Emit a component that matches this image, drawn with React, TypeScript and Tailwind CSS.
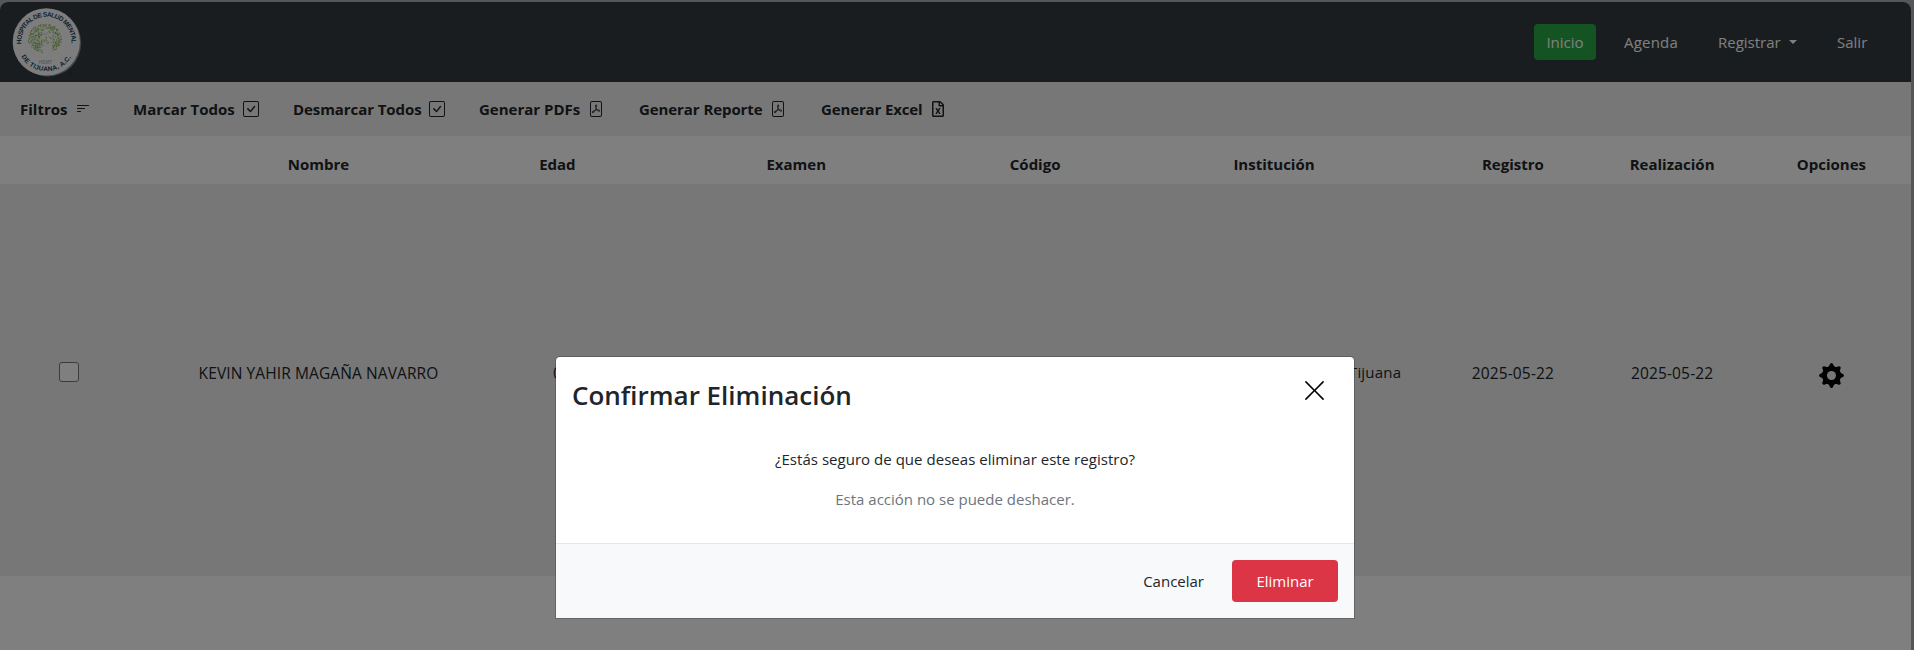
import { BsFilterLeft, BsCheckSquare, BsFilePdf, BsXLg } from "react-icons/bs";
import { FaRegFileExcel } from "react-icons/fa";

function brainDots() {
  const dots: { x: number; y: number; r: number; o: number }[] = [];
  let seed = 7;
  const rnd = () => {
    seed = (seed * 16807) % 2147483647;
    return seed / 2147483647;
  };
  while (dots.length < 520) {
    const x = 28 + rnd() * 36;
    const y = 23 + rnd() * 32;
    const dist = ((x - 45) / 17) ** 2 + ((y - 38) / 14.5) ** 2;
    if (dist > 1) continue;
    if (y > 43 && x > 43 && x < 52) continue;
    if (y > 50 && x > 52) continue;
    const dense = dist > 0.45 || x < 42;
    if (!dense && rnd() > 0.4) continue;
    dots.push({ x, y, r: 0.3 + rnd() * 0.35, o: 0.6 + rnd() * 0.4 });
  }
  return dots;
}

const dots = brainDots();

function Logo() {
  return (
    <svg width="72" height="72" viewBox="10 5.5 72 72" className="block shrink-0">
      <defs>
        <path id="arc-top" d="M21.3 43.6 A25.2 25.2 0 1 1 70.9 47.2" />
        <path id="arc-bottom" d="M20.6 54.7 A28.9 28.9 0 0 0 73 53.2" />
      </defs>
      <circle cx="47.8" cy="42.6" r="33.3" fill="#8d9093" />
      <circle cx="46.3" cy="41.4" r="33.6" fill="#fafafa" />
      {dots.map((d, i) => (
        <circle key={i} cx={d.x} cy={d.y} r={d.r} fill="#7db53f" opacity={d.o} />
      ))}
      <text fontFamily="Liberation Sans" fontWeight="700" fontSize="6.5" fill="#164563">
        <textPath href="#arc-top" textLength="83">HOSPITAL DE SALUD MENTAL</textPath>
      </text>
      <text fontFamily="Liberation Sans" fontWeight="700" fontSize="6.5" fill="#164563">
        <textPath href="#arc-bottom" startOffset="1.5" textLength="60">DE TIJUANA, A.C.</textPath>
      </text>
      <text x="39" y="63.8" fontFamily="Liberation Sans" fontSize="4.6" fill="#9a9a9a" textLength="13">HSMT</text>
      <circle cx="70.3" cy="72.6" r="2.4" fill="#1d3c4c" opacity="0.6" />
    </svg>
  );
}

const teeth = [
  "rotate(0 12.5 12.5)",
  "rotate(45 12.5 12.5)",
  "rotate(90 12.5 12.5)",
  "rotate(135 12.5 12.5)",
  "rotate(180 12.5 12.5)",
  "rotate(225 12.5 12.5)",
  "rotate(270 12.5 12.5)",
  "rotate(315 12.5 12.5)",
];

function Gear() {
  return (
    <svg width="25" height="25" viewBox="0 0 25 25" className="block">
      <defs>
        <mask id="gear-hole">
          <rect width="25" height="25" fill="white" />
          <circle cx="12.5" cy="12.5" r="4.5" fill="black" />
        </mask>
      </defs>
      <g mask="url(#gear-hole)">
        <circle cx="12.5" cy="12.5" r="9.5" />
        {teeth.map((t) => (
          <path key={t} d="M8.6 4.6 Q10.2 3.8 10.8 1.6 Q11.3 0 12.5 0 Q13.7 0 14.2 1.6 Q14.8 3.8 16.4 4.6 Z" transform={t} />
        ))}
      </g>
    </svg>
  );
}

const tools = [
  { label: "Filtros", Icon: BsFilterLeft, box: "w-[113px]", text: "w-[55px]" },
  { label: "Marcar Todos", Icon: BsCheckSquare, box: "w-[160px]", text: "w-[110px]" },
  { label: "Desmarcar Todos", Icon: BsCheckSquare, box: "w-[186px]", text: "w-[136px] tracking-[-0.08px]" },
  { label: "Generar PDFs", Icon: BsFilePdf, box: "w-[160px]", text: "w-[109px]" },
  { label: "Generar Reporte", Icon: BsFilePdf, box: "w-[182px]", text: "w-[131px] tracking-[-0.08px]" },
  { label: "Generar Excel", Icon: FaRegFileExcel, box: "w-[160px]", text: "w-[109px] tracking-[-0.14px]" },
];

const headers = [
  { label: "", span: "col-span-1" },
  { label: "Nombre", span: "col-span-2" },
  { label: "Edad", span: "col-span-1" },
  { label: "Examen", span: "col-span-2" },
  { label: "Código", span: "col-span-1" },
  { label: "Institución", span: "col-span-2" },
  { label: "Registro", span: "col-span-1" },
  { label: "Realización", span: "col-span-1" },
  { label: "Opciones", span: "col-span-1" },
];

export default function App() {
  return (
    <div className="relative h-[650px] w-full overflow-hidden bg-[#abacb4] pt-[2px] font-['Open_Sans',sans-serif] text-[15px] leading-6 text-[#212529]">
      <div className="flex h-full w-[1911px] flex-col overflow-hidden rounded-t-lg bg-white">
        <header className="flex h-20 shrink-0 items-center justify-between bg-[#343a40] pl-[10px] pr-[44px] text-white">
          <Logo />
          <nav className="flex items-center">
            <a className="mr-[28px] flex h-9 w-[62px] items-center justify-center rounded bg-[#28a745]">Inicio</a>
            <a className="w-[94px] tracking-[0.2px]">Agenda</a>
            <a className="flex w-[119px] items-center">
              <span className="w-[71px]">Registrar</span>
              <i className="border-x-4 border-t-4 border-x-transparent border-t-white" />
            </a>
            <a className="w-[30px]">Salir</a>
          </nav>
        </header>
        <div className="flex h-[54px] shrink-0 items-center bg-[#eee] pl-5 font-bold">
          {tools.map(({ label, Icon, box, text }) => (
            <button key={label} className={`flex items-center text-left ${box}`}>
              <span className={`whitespace-nowrap ${text}`}>{label}</span>
              <Icon size={16} />
            </button>
          ))}
        </div>
        <div className="grid h-12 shrink-0 grid-cols-12 items-center pt-2 text-center font-bold">
          {headers.map((h, i) => (
            <div key={i} className={h.span}>{h.label}</div>
          ))}
        </div>
        <div className="grid h-[392px] shrink-0 grid-cols-12 items-center bg-[#eee] text-center text-[15.5px]">
          <div className="pb-[17px] pl-[59px]">
            <div className="h-5 w-5 rounded-[3px] border border-[#767676] bg-white" />
          </div>
          <div className="col-span-2 pb-[15px] tracking-[0.1px]">KEVIN YAHIR MAGAÑA NAVARRO</div>
          <div className="pb-[15px]">0</div>
          <div className="col-span-2" />
          <div />
          <div className="col-span-2 whitespace-nowrap pb-4 pl-[19px] text-[15px] tracking-[0.2px]">Hospital de Salud Mental Tijuana</div>
          <div className="pb-[15px] tracking-[0.15px]">2025-05-22</div>
          <div className="pb-[15px] tracking-[0.15px]">2025-05-22</div>
          <div className="flex justify-center pb-[9px] text-black">
            <Gear />
          </div>
        </div>
      </div>

      <div className="absolute inset-0 flex items-start justify-center bg-black/50 pt-[357px]">
        <div className="-ml-1 w-[798px] rounded-t bg-white shadow-[0_0_0_1px_rgba(0,0,0,0.2)]">
          <div className="flex h-[84px] items-start justify-between pl-4 pr-[27px] pt-[21px]">
            <h2 className="text-[26px] font-semibold leading-[34px]">Confirmar Eliminación</h2>
            <BsXLg size={25} className="text-black" />
          </div>
          <div className="flex h-[102px] flex-col items-center gap-4 pt-[6px]">
            <p className="tracking-[0.03px]">¿Estás seguro de que deseas eliminar este registro?</p>
            <p className="text-[#6c757d]">Esta acción no se puede deshacer.</p>
          </div>
          <div className="flex h-[75px] items-center justify-end border-t border-[#e3e6ea] bg-[#f8f9fb] pr-4">
            <button className="mr-7">Cancelar</button>
            <button className="flex h-[42px] w-[106px] items-center justify-center rounded bg-[#dc3545] text-white">Eliminar</button>
          </div>
        </div>
      </div>
    </div>
  );
}
